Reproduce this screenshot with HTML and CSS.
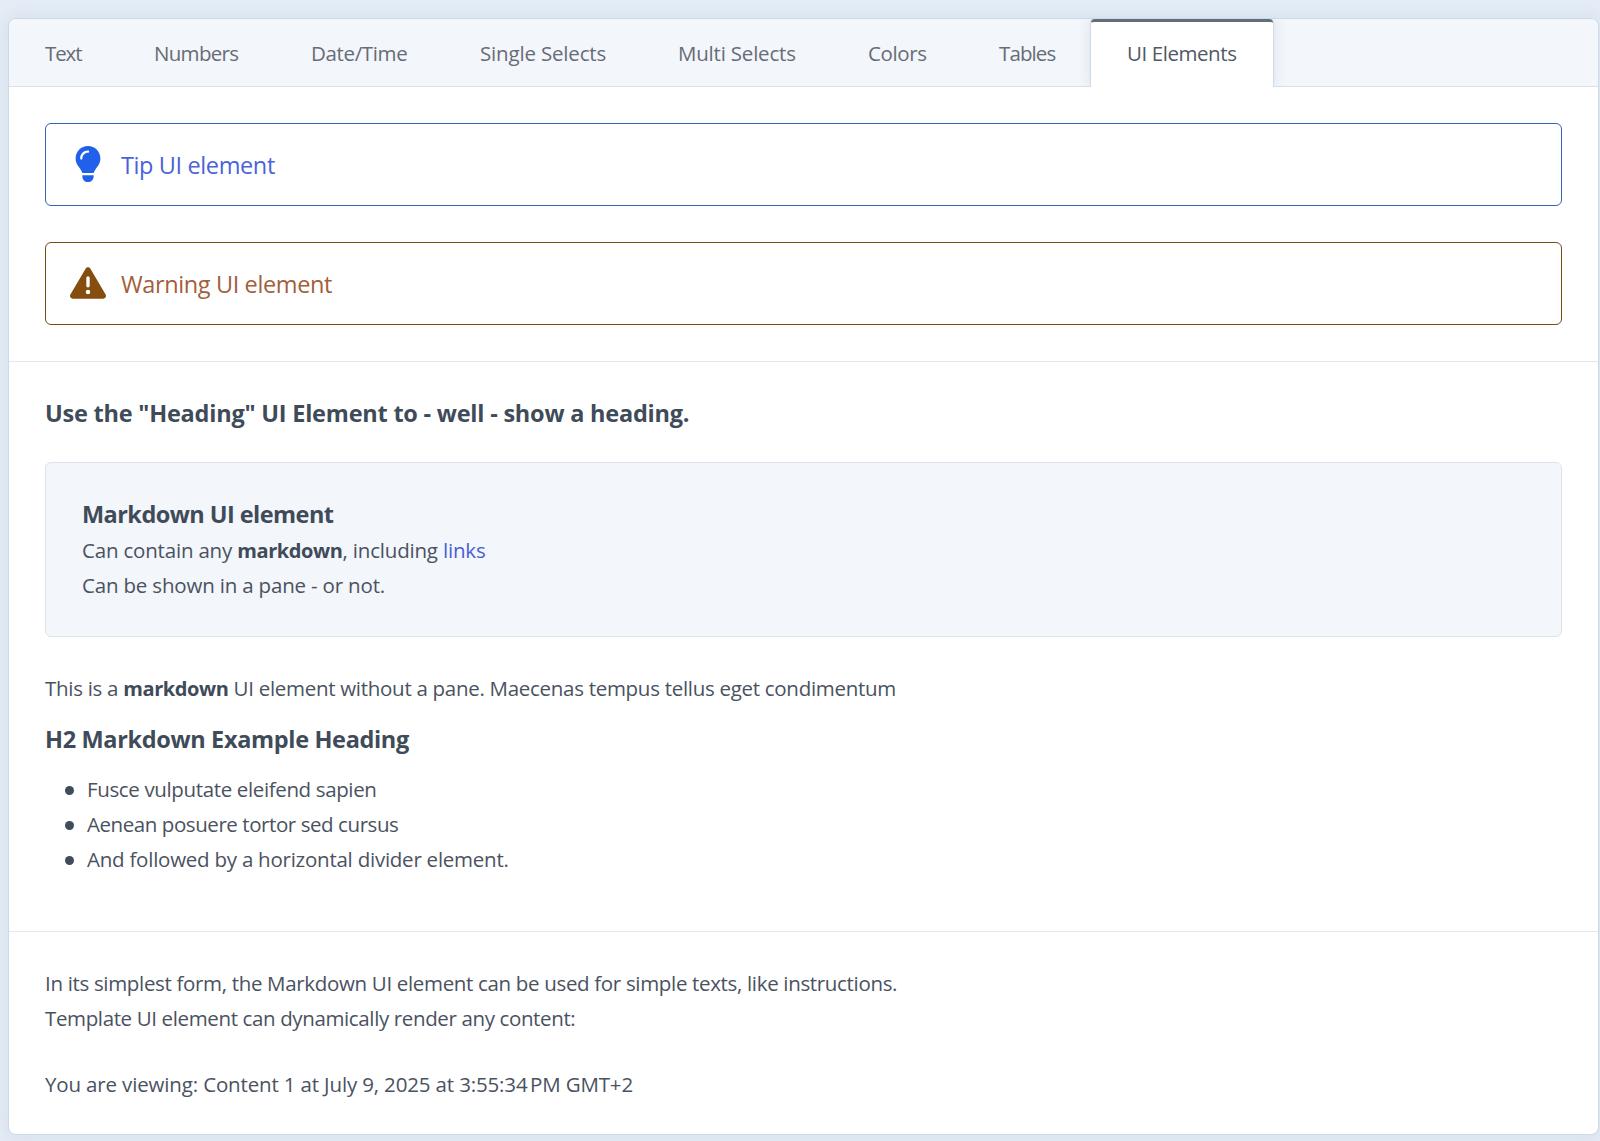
FILE: index.html
```
<!DOCTYPE html>
<html lang="en">
<head>
<meta charset="utf-8">
<title>UI Elements</title>
<link rel="stylesheet" href="styles.css">
</head>
<body>
<main class="card">
  <nav class="tabs">
    <a class="tab tab-text">Text</a>
    <a class="tab tab-numbers">Numbers</a>
    <a class="tab tab-date">Date/Time</a>
    <a class="tab tab-single">Single Selects</a>
    <a class="tab tab-multi">Multi Selects</a>
    <a class="tab tab-colors">Colors</a>
    <a class="tab tab-tables">Tables</a>
    <a class="tab tab-ui active">UI Elements</a>
  </nav>

  <section class="section notices">
    <div class="notice tip">
      <svg class="icon" viewBox="-64 0 512 512"><path d="M272 384c9.6-31.900 29.500-59.100 49.200-86.200c5.200-7.100 10.400-14.200 15.400-21.400c19.800-28.500 31.400-63 31.400-100.300C368 78.800 289.200 0 192 0S16 78.800 16 176c0 37.300 11.600 71.900 31.400 100.300c5 7.200 10.200 14.300 15.400 21.400c19.800 27.100 39.700 54.400 49.200 86.200H272zM192 512c44.200 0 80-35.800 80-80V416H112v16c0 44.200 35.800 80 80 80zM112 176c0 8.800-7.200 16-16 16s-16-7.200-16-16c0-61.900 50.100-112 112-112c8.800 0 16 7.200 16 16s-7.200 16-16 16c-44.200 0-80 35.800-80 80z"/></svg>
      <span class="notice-text">Tip UI element</span>
    </div>
    <div class="notice warning">
      <svg class="icon" viewBox="0 0 512 512"><path d="M256 32c14.200 0 27.300 7.500 34.500 19.800l216 368c7.300 12.400 7.300 27.700 .2 40.100S486.300 480 472 480H40c-14.300 0-27.600-7.700-34.700-20.100s-7-27.800 .2-40.100l216-368C228.700 39.500 241.800 32 256 32zm0 128c-13.300 0-24 10.700-24 24V296c0 13.300 10.700 24 24 24s24-10.700 24-24V184c0-13.300-10.700-24-24-24zm32 224a32 32 0 1 0 -64 0 32 32 0 1 0 64 0z"/></svg>
      <span class="notice-text">Warning UI element</span>
    </div>
  </section>

  <section class="section examples">
    <h2 class="main-heading">Use the "Heading" UI Element to - well - show a heading.</h2>
    <div class="pane">
      <h2 class="pane-heading">Markdown UI element</h2>
      <p class="line-any">Can contain any <strong>markdown</strong>, including <a class="link">links</a></p>
      <p class="line-pane">Can be shown in a pane - or not.</p>
    </div>
    <p class="line-plain">This is a <strong>markdown</strong> UI element without a pane. Maecenas tempus tellus eget condimentum</p>
    <h2 class="sub-heading">H2 Markdown Example Heading</h2>
    <ul class="list">
      <li class="item-one">Fusce vulputate eleifend sapien</li>
      <li class="item-two">Aenean posuere tortor sed cursus</li>
      <li class="item-three">And followed by a horizontal divider element.</li>
    </ul>
  </section>

  <section class="section closing">
    <p class="line-simple">In its simplest form, the Markdown UI element can be used for simple texts, like instructions.</p>
    <p class="line-template">Template UI element can dynamically render any content:</p>
    <p class="line-viewing">You are viewing: Content 1 at July 9, 2025 at 3:55:34&#8239;PM GMT+2</p>
  </section>
</main>
</body>
</html>
```
FILE: styles.css
```
* { box-sizing: border-box; }

body {
  margin: 0;
  padding: 18px 1px 0 8px;
  height: 1141px;
  overflow: hidden;
  background: #e4ecf5;
  color: #4a5261;
  font: 20.5px/35px "Segoe UI", "Open Sans", "Noto Sans", sans-serif;
}

h2, p, ul { margin: 0; padding: 0; }

h2 {
  color: #404b59;
  font-size: 23.5px;
  line-height: 33px;
  font-weight: 700;
}

strong { color: #404b59; font-size: 20px; letter-spacing: -0.4px; }

.card {
  height: 1117px;
  border: 1px solid #cdd9e4;
  border-radius: 8px;
  background: #fff;
  box-shadow: 0 0 16px rgba(80, 120, 160, 0.12);
  overflow: hidden;
}

.tabs {
  display: flex;
  height: 68px;
  background: #f3f6fb;
  border-bottom: 1px solid #d9e0e8;
}

.tab {
  padding-left: 36px;
  line-height: 69px;
  color: #666c76;
  white-space: nowrap;
}

.tab-text { width: 109px; letter-spacing: -1.1px; }
.tab-numbers { width: 157px; letter-spacing: -0.7px; }
.tab-date { width: 169px; letter-spacing: -0.36px; }
.tab-single { width: 198px; letter-spacing: -0.17px; }
.tab-multi { width: 190px; letter-spacing: -0.2px; }
.tab-colors { width: 130px; letter-spacing: -0.4px; }
.tab-tables { width: 129px; padding-left: 37px; letter-spacing: -0.9px; }
.tab-ui { width: 182px; letter-spacing: -0.43px; }

.tab.active {
  height: 68px;
  border-top: 3px solid #646e7a;
  border-radius: 4px 4px 0 0;
  background: #fff;
  color: #515966;
  line-height: 63px;
  box-shadow: 0 0 14px rgba(80, 120, 160, 0.17), 0 0 1px 1px #d9e2eb;
  clip-path: inset(0 -30px 0 -30px);
}

.section + .section { border-top: 1px solid #e4e8ec; }

.notices {
  display: flex;
  flex-direction: column;
  gap: 36px;
  padding: 36px;
}

.notice {
  display: flex;
  align-items: center;
  gap: 15px;
  height: 83px;
  padding: 0 24px;
  border: 1px solid;
  border-radius: 6px;
  font-size: 23.5px;
  letter-spacing: -0.38px;
}

.tip { border-color: #3563b0; color: #4a62da; }
.warning { border-color: #7a4a12; color: #a35e3b; }

.notice-text { padding-top: 2px; }
.icon { width: 36px; height: 36px; margin-bottom: 1px; }
.tip .icon { fill: #2060ea; }
.warning .icon { fill: #854d0e; }

.examples { padding: 35px 36px 54px; }
.main-heading { letter-spacing: -0.22px; }

.pane {
  margin: 32px 0 34px;
  padding: 35px 36px 33px;
  border: 1px solid #dde4ec;
  border-radius: 6px;
  background: #f3f6fb;
}

.pane-heading { margin-bottom: 2px; letter-spacing: -0.55px; }
.line-any { letter-spacing: -0.19px; }
.line-pane { letter-spacing: -0.18px; }
.link { color: #4560d8; }
.line-plain { letter-spacing: -0.29px; }
.sub-heading { margin: 17px 0 16px; letter-spacing: -0.34px; }

.list { padding-left: 20px; list-style: none; }

.list li {
  display: flex;
  align-items: center;
  gap: 13px;
}

.list li::before {
  content: "";
  width: 9px;
  height: 9px;
  margin-top: 1px;
  border-radius: 50%;
  background: #414c5a;
}

.item-one { letter-spacing: -0.36px; }
.item-two { letter-spacing: -0.43px; }
.item-three { letter-spacing: -0.24px; }

.closing { padding: 34px 36px 32px; }
.line-simple { letter-spacing: -0.33px; }
.line-template { letter-spacing: -0.37px; }
.line-viewing { margin-top: 31px; letter-spacing: -0.15px; }
```
